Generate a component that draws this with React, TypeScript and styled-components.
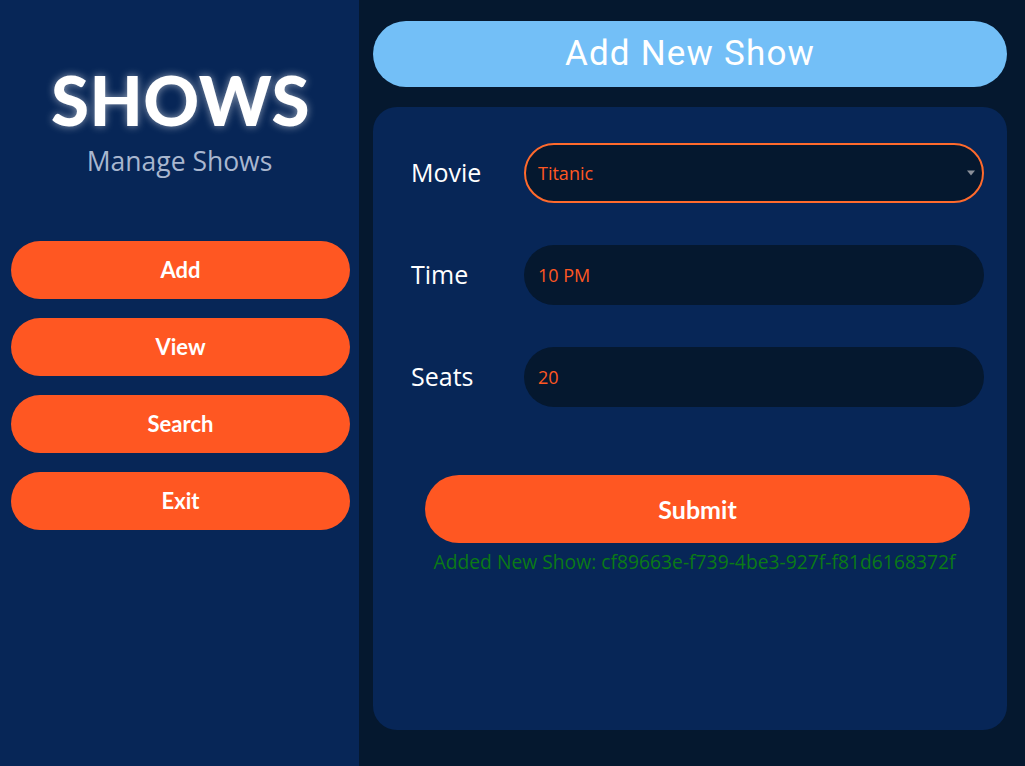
import React from "react";
import styled, { createGlobalStyle } from "styled-components";

const Global = createGlobalStyle`
  html, body { margin: 0; padding: 0; }
  body { background: #05182f; font-family: "Open Sans", sans-serif; }
  #root { height: 766px; }
`;

const Layout = styled.div`
  display: flex;
  width: 1025px;
  height: 766px;
  overflow: hidden;
`;

const Sidebar = styled.aside`
  width: 359px;
  flex-shrink: 0;
  background: #072657;
  display: flex;
  flex-direction: column;
  align-items: stretch;
  padding: 0 9px 0 11px;
  box-sizing: border-box;
`;

const Brand = styled.div`
  display: flex;
  flex-direction: column;
  align-items: center;
  padding-top: 60px;
  margin-bottom: 63px;
`;

const Title = styled.h1`
  margin: 0;
  font-family: Lato, sans-serif;
  font-weight: 900;
  font-size: 69px;
  line-height: 80px;
  color: #ffffff;
  letter-spacing: 0.5px;
  text-shadow: 0 0 8px rgba(255, 255, 255, 0.55);
`;

const Subtitle = styled.div`
  font-family: "Open Sans", sans-serif;
  font-size: 26.5px;
  line-height: 34px;
  color: #a9b7cf;
  margin-top: 4px;
  margin-left: -2px;
`;

const Nav = styled.nav`
  display: flex;
  flex-direction: column;
  gap: 19px;
`;

const NavButton = styled.button`
  height: 58px;
  border: none;
  border-radius: 29px;
  background: #ff5722;
  color: #ffffff;
  font-family: Lato, sans-serif;
  font-weight: 700;
  font-size: 22px;
  padding-bottom: 2px;
  cursor: pointer;
`;

const Main = styled.main`
  flex: 1;
  background: #05182f;
  padding: 21px 18px 36px 14px;
  display: flex;
  flex-direction: column;
  gap: 20px;
`;

const Header = styled.div`
  height: 66px;
  border-radius: 33px;
  background: #73bff7;
  display: flex;
  align-items: center;
  justify-content: center;
  font-family: Roboto, sans-serif;
  font-size: 35px;
  color: #ffffff;
  letter-spacing: 1.2px;
  padding-bottom: 2px;
  box-sizing: border-box;
`;

const Card = styled.section`
  flex: 1;
  background: #072657;
  border-radius: 24px;
  padding: 36px 23px 0 38px;
`;

const Form = styled.form`
  display: flex;
  flex-direction: column;
`;

const Row = styled.div`
  display: grid;
  grid-template-columns: 113px 1fr;
  align-items: center;
  height: 60px;
  margin-bottom: 42px;
`;

const Label = styled.label`
  font-family: "Open Sans", sans-serif;
  font-size: 25px;
  color: #ffffff;
  padding-bottom: 3px;
`;

const fieldBase = `
  height: 60px;
  width: 100%;
  box-sizing: border-box;
  border-radius: 30px;
  background: #05182f;
  color: #ff5722;
  font-family: "Open Sans", sans-serif;
  font-size: 18px;
  padding: 0 14px;
  outline: none;
`;

const Input = styled.input`
  ${fieldBase}
  border: none;
`;

const SelectWrap = styled.div`
  position: relative;
  width: 100%;
`;

const Select = styled.select`
  ${fieldBase}
  border: 2px solid #ff6a2c;
  padding: 0 12px;
  appearance: none;
  -webkit-appearance: none;
`;

const Caret = styled.span`
  position: absolute;
  right: 9px;
  top: 50%;
  transform: translateY(-50%);
  width: 0;
  height: 0;
  border-left: 4px solid transparent;
  border-right: 4px solid transparent;
  border-top: 5px solid #8a8f99;
  pointer-events: none;
`;

const Submit = styled.button`
  margin: 26px 14px 0;
  height: 68px;
  border: none;
  border-radius: 34px;
  background: #ff5722;
  color: #ffffff;
  font-family: Lato, sans-serif;
  font-weight: 700;
  font-size: 25px;
  padding-bottom: 2px;
  cursor: pointer;
`;

const Message = styled.div`
  text-align: center;
  color: #0b7a16;
  font-family: "Open Sans", sans-serif;
  font-size: 19.3px;
  margin-top: 5px;
  margin-right: 6px;
`;

export default function App() {
  return (
    <>
      <Global />
      <Layout>
        <Sidebar>
          <Brand>
            <Title>SHOWS</Title>
            <Subtitle>Manage Shows</Subtitle>
          </Brand>
          <Nav>
            <NavButton>Add</NavButton>
            <NavButton>View</NavButton>
            <NavButton>Search</NavButton>
            <NavButton>Exit</NavButton>
          </Nav>
        </Sidebar>
        <Main>
          <Header>Add New Show</Header>
          <Card>
            <Form onSubmit={(e) => e.preventDefault()}>
              <Row>
                <Label>Movie</Label>
                <SelectWrap>
                  <Select defaultValue="Titanic">
                    <option>Titanic</option>
                  </Select>
                  <Caret />
                </SelectWrap>
              </Row>
              <Row>
                <Label>Time</Label>
                <Input defaultValue="10 PM" />
              </Row>
              <Row>
                <Label>Seats</Label>
                <Input defaultValue="20" />
              </Row>
              <Submit type="submit">Submit</Submit>
              <Message>
                Added New Show: cf89663e-f739-4be3-927f-f81d6168372f
              </Message>
            </Form>
          </Card>
        </Main>
      </Layout>
    </>
  );
}
